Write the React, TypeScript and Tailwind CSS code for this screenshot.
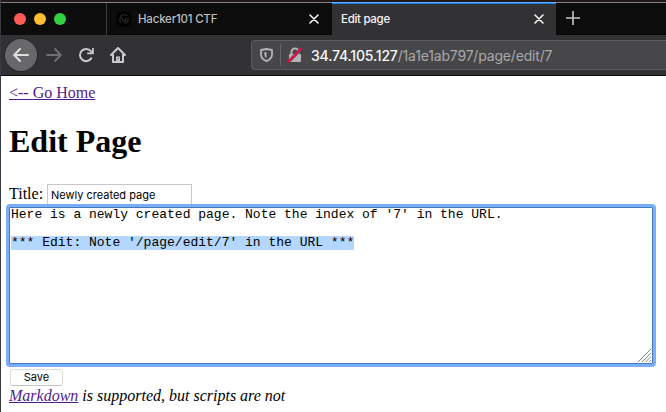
import React from "react";

function CloseIcon() {
  return (
    <svg className="h-[10px] w-[10px]" viewBox="0 0 10 10" fill="none" stroke="#f4f4f4" strokeWidth="1.6" strokeLinecap="round">
      <path d="M1 1l8 8M9 1L1 9" />
    </svg>
  );
}

function TabBar() {
  return (
    <div className="flex h-[32px] bg-[#0c0c0d] font-[Inter,sans-serif] text-[11.5px] font-medium leading-[32px] tracking-[-0.3px]">
      <div className="flex w-[106px] items-center gap-2 border-r border-[#3b3b3d] pl-[13px]">
        <span className="h-3 w-3 rounded-full bg-[#ff5a58]" />
        <span className="h-3 w-3 rounded-full bg-[#febc30]" />
        <span className="h-3 w-3 rounded-full bg-[#33d045]" />
      </div>
      <div className="flex w-[225px] items-center border-b border-[#050505] pl-[9px] pr-[13px]">
        <svg className="h-4 w-4" viewBox="0 0 16 16" fill="none">
          <circle cx="8" cy="8" r="8" fill="#020202" />
          <path d="M4 6c2-3 5-3 7-1M12 7c1 3-1 5-4 5M5 12c-2-2-2-4 1-6M9 7c2 1 1 3-1 3-2 0-2-2-1-3" stroke="#252527" strokeWidth="1.4" />
        </svg>
        <span className="ml-[6px] tracking-[-0.2px] text-[#bdbdbf]">Hacker101 CTF</span>
        <span className="ml-auto"><CloseIcon /></span>
      </div>
      <div className="flex w-[224px] items-center bg-[#323234] pl-[9px] pr-[12px] shadow-[0_-1px_0_#68aaf5,inset_0_1px_0_#1683ee]">
        <span className="text-[#f5f5f6]">Edit page</span>
        <span className="ml-auto"><CloseIcon /></span>
      </div>
      <div className="flex flex-1 items-center border-b border-[#050505] pb-[1px] pl-[10px]">
        <svg className="h-[14px] w-[14px]" viewBox="0 0 14 14" stroke="#c5c5c7" strokeWidth="1.6">
          <path d="M7 0v14M0 7h14" />
        </svg>
      </div>
    </div>
  );
}

function Toolbar() {
  return (
    <div className="flex h-[41px] items-center border-b border-[#0c0c0d] bg-[#323234] pl-1">
      <div className="flex h-8 w-8 items-center justify-center rounded-full bg-[#68686a] shadow-[0_0_0_1px_#29292b]">
        <svg className="h-4 w-4" viewBox="0 0 16 16" fill="none" stroke="#dededf" strokeWidth="2" strokeLinecap="round" strokeLinejoin="round">
          <path d="M15 8H1.5M7 2L1.2 8 7 14" />
        </svg>
      </div>
      <svg className="ml-[9px] h-4 w-4" viewBox="0 0 16 16" fill="none" stroke="#707072" strokeWidth="1.8" strokeLinecap="round" strokeLinejoin="round">
        <path d="M1 8h13.5M9 2l5.8 6L9 14" />
      </svg>
      <svg className="ml-[16px] h-4 w-4" viewBox="0 0 16 16" fill="none" stroke="#c9c9cb" strokeWidth="2" strokeLinecap="round">
        <path d="M13.2 11.4A6.1 6.1 0 1 1 12.8 4.2" />
        <path d="M15.8 1v6.2H9.2V5.4h3.2l1.6-1.5V1z" fill="#c9c9cb" stroke="none" />
      </svg>
      <svg className="ml-[16px] h-4 w-4" viewBox="0 0 16 16" fill="none" stroke="#c9c9cb" strokeWidth="2" strokeLinecap="round" strokeLinejoin="round">
        <path d="M1 8l7-7 7 7M3 7v8h10V7" />
        <path d="M6 9.5h4V15H6z" fill="#c9c9cb" stroke="none" />
        <path d="M8 11.5v.2" stroke="#323234" strokeWidth="1.2" />
      </svg>
      <div className="ml-[125px] flex h-[30px] flex-1 items-center rounded-l-[4px] border-y border-l border-[#5b5b5d] bg-[#474749]">
        <svg className="ml-[8px] h-[14px] w-[13px]" viewBox="0 0 13 14" fill="none">
          <path d="M6.5 1L12 2v4.5c0 3-2 5.2-5.5 6.7C3 11.7 1 9.5 1 6.5V2z" stroke="#b4b4b6" strokeWidth="1.8" strokeLinejoin="round" />
          <path d="M6.5 3.9v6.2C5 9.2 4.4 7.8 4.4 6V4.3z" fill="#b4b4b6" />
        </svg>
        <span className="ml-[7px] h-[22px] w-px bg-[#64646d]" />
        <svg className="ml-[6px] h-[16px] w-[16px]" viewBox="0 0 16 16" fill="none">
          <path d="M4.5 8V5a3.5 3.5 0 0 1 7 0v3" stroke="#b4b4b6" strokeWidth="2" />
          <rect x="2" y="7" width="12" height="8" rx="1" fill="#b4b4b6" />
          <path d="M.8 15.5L14.5 1.5" stroke="#474749" strokeWidth="3" />
          <path d="M1.2 14.8L14.3 1.5" stroke="#f20a4b" strokeWidth="2" strokeLinecap="round" />
        </svg>
        <div className="ml-[8px] whitespace-nowrap pt-px font-[Inter,sans-serif] text-[14px] tracking-[-0.18px] text-[#a8a8aa]">
          <span className="font-medium text-[#f9f9fa]">34.74.105.127</span>/1a1e1ab797/page/edit/7
        </div>
      </div>
    </div>
  );
}

function EditForm() {
  return (
    <main className="h-[336px] bg-white pl-2 font-['Liberation_Serif',serif] text-[16px] leading-[18px] text-black">
      <div className="pt-2"><a className="text-[#551a8b] underline">&lt;-- Go Home</a></div>
      <h1 className="mt-[21px] text-[32px] font-bold leading-[37px]">Edit Page</h1>
      <div className="mt-[24px] flex h-[22px]">
        <span className="w-[38px] pt-[1px]">Title:</span>
        <div className="h-[22px] w-[145px] border border-[#c7c7c7] pl-[3px] font-[Inter,sans-serif] text-[11px] leading-[21px]">Newly created page</div>
      </div>
      <div className="relative mt-[1px] flex h-[157px] w-[644px] flex-col bg-white p-px pl-[2px] font-['Liberation_Mono',monospace] text-[13px] leading-[14px] shadow-[inset_0_0_0_1px_#4579bf] outline-3 outline-[#74abfa]/95 rounded-[1px]">
        <div className="h-[14px] whitespace-pre">Here is a newly created page. Note the index of '7' in the URL.</div>
        <div className="mt-[14px] h-[14px] whitespace-pre"><span className="inline-block h-[14px] bg-[#b3d7ff]">*** Edit: Note '/page/edit/7' in the URL ***</span></div>
        <svg className="mb-[1px] mr-[1px] mt-auto h-[13px] w-[13px] self-end" viewBox="0 0 13 13" stroke="#858585" strokeWidth="1">
          <path d="M0 13L13 0M4 13L13 4M7.5 13L13 7.5M11 13l2-2" />
        </svg>
      </div>
      <div className="ml-[1px] mt-[5px] h-[17px] w-[53px] rounded-[3px] border border-[#dedede] border-b-[#c4c4c4] bg-white text-center font-[Inter,sans-serif] text-[11px] leading-[15px]">Save</div>
      <div className="mt-px italic"><a className="text-[#551a8b] underline">Markdown</a> is supported, but scripts are not</div>
    </main>
  );
}

export default function App() {
  return (
    <div className="h-[412px] w-[666px] overflow-hidden border-l border-[#3a3a45] bg-[#0c0c0d]">
      <div className="h-[2px] bg-[#201719]" />
      <div className="h-px bg-[#858083]" />
      <TabBar />
      <Toolbar />
      <EditForm />
    </div>
  );
}
